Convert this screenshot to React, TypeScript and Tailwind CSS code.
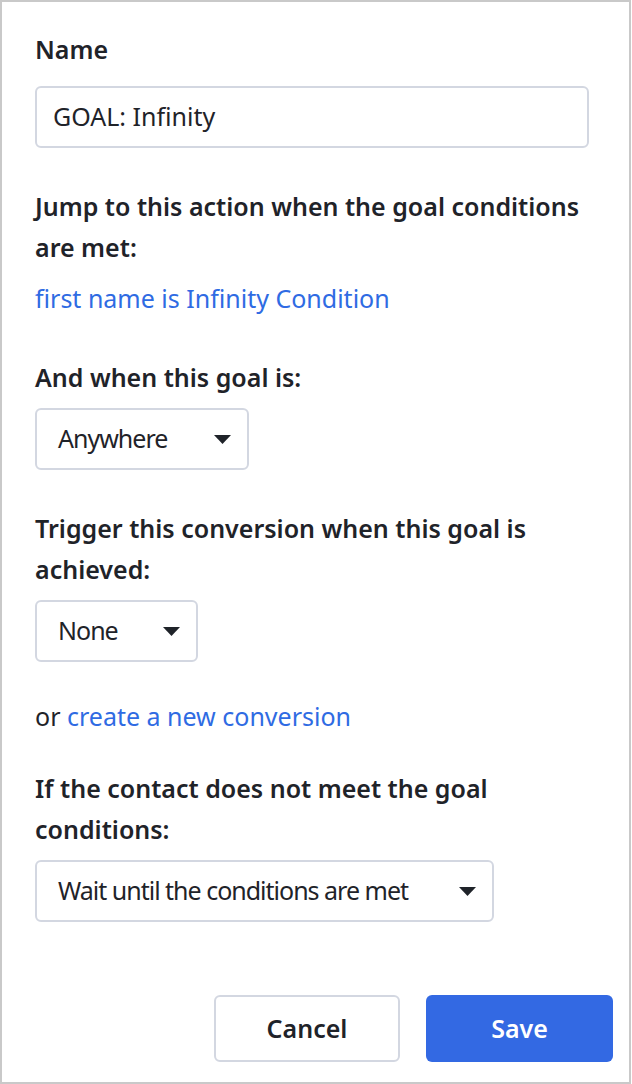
import React from "react";

function Caret() {
  return (
    <svg width="17" height="9" viewBox="0 0 17 9" className="shrink-0">
      <path d="M0 0 L17 0 L8.5 9 Z" fill="#1f2329" />
    </svg>
  );
}

function Select({ label, width }: { label: string; width: string }) {
  return (
    <div
      className={`flex h-[62px] items-center justify-between rounded-[6px] border-2 border-[#d3d7e1] bg-white pl-[21px] pr-[16px] ${width}`}
    >
      <span className="text-[25px] tracking-[-1px] text-[#1f2329]">{label}</span>
      <Caret />
    </div>
  );
}

export default function App() {
  return (
    <div
      className="h-[1084px] w-[631px] border-2 border-[#c9c9c9] bg-white pl-[33px] pr-[16px] pt-[27px] text-[#1f2329]"
      style={{ fontFamily: "'Noto Sans', Roboto, sans-serif" }}
    >
      <div className="text-[25px] font-semibold leading-[41px]">Name</div>
      <div className="mt-[16px] flex h-[62px] w-[554px] items-center rounded-[6px] border-2 border-[#d3d7e1] pl-[16px] text-[25px]">
        GOAL: Infinity
      </div>

      <div className="mt-[38px] text-[25px] font-semibold leading-[41px]">
        Jump to this action when the goal conditions are met:
      </div>
      <div className="mt-[10px] text-[25px] leading-[41px] text-[#2f6be3]">
        first name is Infinity Condition
      </div>

      <div className="mt-[38px] text-[25px] font-semibold leading-[41px]">And when this goal is:</div>
      <div className="mt-[10px]">
        <Select label="Anywhere" width="w-[214px]" />
      </div>

      <div className="mt-[38px] text-[25px] font-semibold leading-[41px]">
        Trigger this conversion when this goal is achieved:
      </div>
      <div className="mt-[10px]">
        <Select label="None" width="w-[163px]" />
      </div>

      <div className="mt-[34px] text-[25px] leading-[41px]">
        or <span className="text-[#2f6be3]">create a new conversion</span>
      </div>

      <div className="mt-[31px] text-[25px] font-semibold leading-[41px]">
        If the contact does not meet the goal conditions:
      </div>
      <div className="mt-[10px]">
        <Select label="Wait until the conditions are met" width="w-[459px]" />
      </div>

      <div className="mt-[73px] flex justify-end gap-[26px]">
        <button className="flex h-[67px] w-[186px] items-center justify-center rounded-[6px] border-2 border-[#d3d7e1] bg-white text-[25px] font-semibold text-[#1f2329]">
          Cancel
        </button>
        <button className="flex h-[67px] w-[187px] items-center justify-center rounded-[6px] bg-[#3369e3] text-[25px] font-semibold text-white">
          Save
        </button>
      </div>
    </div>
  );
}
